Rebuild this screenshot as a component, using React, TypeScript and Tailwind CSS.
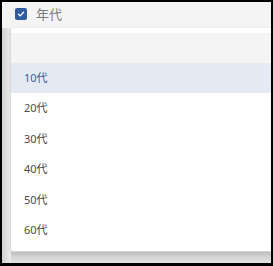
import React from 'react';

const ages = ['10代', '20代', '30代', '40代', '50代', '60代'];

const CheckIcon: React.FC = () => (
  <svg viewBox="0 0 12 12" className="w-[8px] h-[8px]" fill="none" stroke="white" strokeWidth="2" strokeLinecap="round" strokeLinejoin="round">
    <path d="M2.2 6.3 4.8 8.8 9.8 3.4" />
  </svg>
);

const App: React.FC = () => {
  return (
    <div
      className="w-[273px] h-[266px] border-2 border-b-[3px] border-black bg-[#f4f4f4] flex flex-col overflow-hidden"
      style={{ fontFamily: '"Noto Sans", "Noto Sans CJK JP", sans-serif' }}
    >
      <div className="h-[26px] flex items-start pt-[6px] pl-[13px] gap-[9px]">
        <div className="w-[12px] h-[12px] mt-[0px] rounded-[2px] bg-[#2f5c9e] flex items-center justify-center">
          <CheckIcon />
        </div>
        <span className="text-[13px] leading-[13px] text-[#7a7a7a]">年代</span>
      </div>
      <div className="flex flex-1">
        <div className="w-[9px] bg-gradient-to-r from-[#d2d2d2] to-[#ececec]" />
        <div className="flex-1 flex flex-col">
          <div className="bg-white rounded-tl-[3px] rounded-bl-[3px] pt-[5px] pb-[6px] shadow-[0_1px_3px_rgba(0,0,0,0.2)]">
            <div className="h-[30px] bg-[#f4f4f4]" />
            {ages.map((a, i) => (
              <div
                key={a}
                className={
                  'h-[30.4px] flex items-center pl-[13px] text-[11px] ' +
                  (i === 0 ? 'bg-[#e5eaf2] text-[#3d5c94]' : 'text-[#4a4a4a]')
                }
              >
                {a}
              </div>
            ))}
          </div>
          <div className="flex-1 mt-[1px] bg-gradient-to-b from-[#bdbdbd] via-[#d6d6d6] to-[#e2e2e2]" />
        </div>
      </div>
    </div>
  );
};

export default App;
